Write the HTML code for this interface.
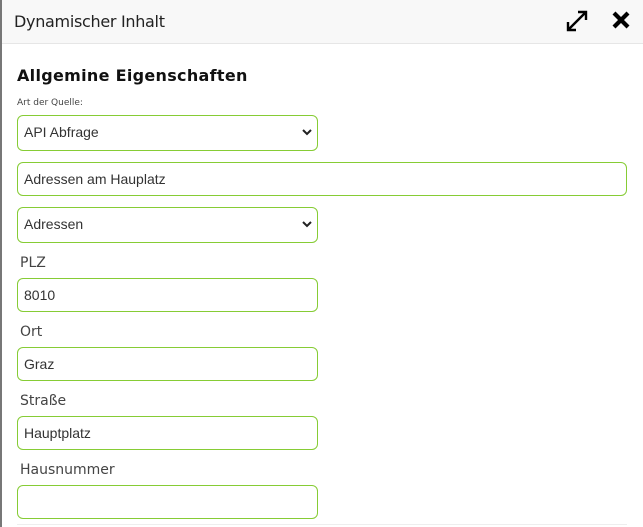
<!DOCTYPE html>
<html><head><style>
*{box-sizing:border-box;margin:0;padding:0}
body{width:643px;height:527px;overflow:hidden;background:#fff;font-family:"Liberation Sans",sans-serif;position:relative}
.lb{position:absolute;left:0;top:0;width:2px;height:527px;background:#777}
.hdr{position:absolute;left:2px;top:0;width:641px;height:44px;background:#f8f8f8;border-bottom:1px solid #e6e6e6}
.t{position:absolute;left:12px;top:12px;font-size:16px;color:#222;font-family:"DejaVu Sans",sans-serif;letter-spacing:-0.3px}
h2{position:absolute;left:17px;top:66px;font-size:16px;font-weight:bold;font-family:"DejaVu Sans",sans-serif;letter-spacing:0.3px;color:#111}
.sm{position:absolute;left:17px;top:98px;font-size:9px;color:#444;font-family:"DejaVu Sans",sans-serif}
.f{position:absolute;left:17px;width:301px;height:34px;border:1px solid #86cc35;border-radius:6px;font-size:14px;color:#333;padding:8px 0 0 6px}
.w{width:610px}
.ch{position:absolute;right:5px;top:12px}
.l{position:absolute;left:20px;font-size:14px;color:#444;font-family:"DejaVu Sans",sans-serif}
.bl{position:absolute;left:17px;top:524px;width:610px;height:1px;background:#eee}
</style></head><body>
<div class="lb"></div>
<div class="hdr"><div class="t">Dynamischer Inhalt</div>
<svg style="position:absolute;left:563px;top:9px" width="24" height="24" viewBox="0 0 24 24" fill="none" stroke="#000" stroke-width="2.4"><path d="M3 21L21 3M13 3h8v8M3 13v8h8"/></svg>
<svg style="position:absolute;left:609px;top:10px" width="20" height="20" viewBox="0 0 20 20" stroke="#000" stroke-width="4.2"><path d="M3 3L17 17M17 3L3 17"/></svg>
</div>
<h2>Allgemine Eigenschaften</h2>
<div class="sm">Art der Quelle:</div>
<div class="f" style="top:115px;height:36px">API Abfrage<svg class="ch" width="10" height="8" viewBox="0 0 10 8"><path d="M1 2l4 4 4-4" stroke="#222" stroke-width="2" fill="none"/></svg></div>
<div class="f w" style="top:162px">Adressen am Hauplatz</div>
<div class="f" style="top:207px;height:36px">Adressen<svg class="ch" width="10" height="8" viewBox="0 0 10 8"><path d="M1 2l4 4 4-4" stroke="#222" stroke-width="2" fill="none"/></svg></div>
<div class="l" style="top:255px">PLZ</div>
<div class="f" style="top:278px">8010</div>
<div class="l" style="top:324px">Ort</div>
<div class="f" style="top:347px">Graz</div>
<div class="l" style="top:393px">Straße</div>
<div class="f" style="top:416px">Hauptplatz</div>
<div class="l" style="top:462px">Hausnummer</div>
<div class="f" style="top:485px"></div>
<div class="bl"></div>
</body></html>
